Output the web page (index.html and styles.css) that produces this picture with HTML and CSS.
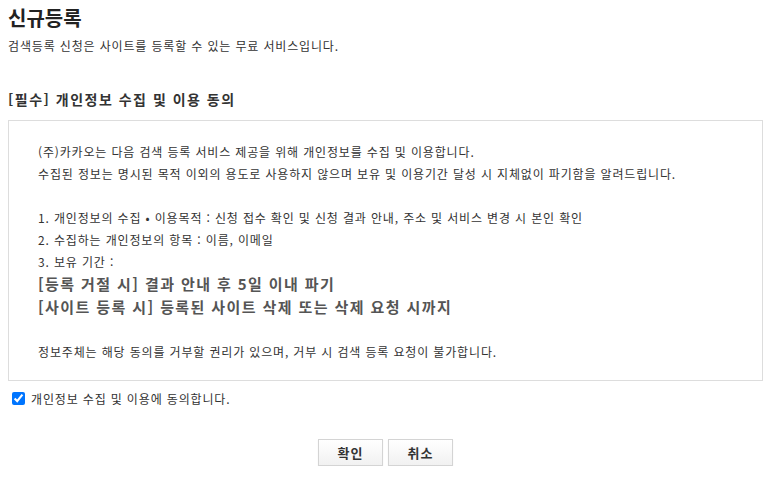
FILE: index.html
```html
<!DOCTYPE html>
<html lang="ko">
<head>
  <meta charset="UTF-8">
  <title>신규등록</title>
  <link rel="stylesheet" href="styles.css">
</head>
<body>

  <h1 class="title">신규등록</h1>
  <p class="desc">검색등록 신청은 사이트를 등록할 수 있는 무료 서비스입니다.</p>

  <h2 class="section">[필수] 개인정보 수집 및 이용 동의</h2>

  <div class="terms">
    <p>(주)카카오는 다음 검색 등록 서비스 제공을 위해 개인정보를 수집 및 이용합니다.<br>
    수집된 정보는 명시된 목적 이외의 용도로 사용하지 않으며 보유 및 이용기간 달성 시 지체없이 파기함을 알려드립니다.</p>
    <p>1. 개인정보의 수집 • 이용목적 : 신청 접수 확인 및 신청 결과 안내, 주소 및 서비스 변경 시 본인 확인<br>
    2. 수집하는 개인정보의 항목 : 이름, 이메일<br>
    3. 보유 기간 :<br>
    <strong>[등록 거절 시] 결과 안내 후 5일 이내 파기</strong><br>
    <strong>[사이트 등록 시] 등록된 사이트 삭제 또는 삭제 요청 시까지</strong></p>
    <p>정보주체는 해당 동의를 거부할 권리가 있으며, 거부 시 검색 등록 요청이 불가합니다.</p>
  </div>

  <label class="agree">
    <input type="checkbox" checked>
    <span>개인정보 수집 및 이용에 동의합니다.</span>
  </label>

  <div class="buttons">
    <button type="button">확인</button>
    <button type="button">취소</button>
  </div>

</body>
</html>
```

FILE: styles.css
```css
body {
  margin: 8px 4px 8px 8px;
  color: #333;
  font-family: "Noto Sans CJK KR", "Noto Sans", sans-serif;
  font-size: 12px;
  letter-spacing: 0.85px;
  background: #fff;
}
.title {
  margin: 0;
  font-size: 20px;
  line-height: 20px;
  letter-spacing: 0;
  color: #222;
}
.desc {
  margin: 9px 0 0;
  line-height: 18px;
}
.section {
  margin: 34px 0 0;
  font-size: 14px;
  line-height: 20px;
  letter-spacing: 1.5px;
  color: #333;
}
.terms {
  margin-top: 11px;
  border: 1px solid #ddd;
  padding: 20px 29px 17px;
  line-height: 22px;
}
.terms p {
  margin: 0 0 22px;
}
.terms p:last-child {
  margin-bottom: 0;
}
.terms strong {
  font-size: 15px;
  letter-spacing: 1.4px;
  color: #555;
}
.agree {
  display: flex;
  align-items: center;
  gap: 6px;
  margin-top: 9px;
}
.agree input {
  margin: 0 0 0 4px;
  width: 13px;
  height: 13px;
}
.buttons {
  display: flex;
  justify-content: center;
  gap: 5px;
  margin-top: 32px;
}
.buttons button {
  width: 65px;
  height: 27px;
  border: 1px solid #d4d4d4;
  background: linear-gradient(#fff, #f1f1f1);
  font-family: inherit;
  font-size: 13px;
  font-weight: bold;
  letter-spacing: 1px;
  color: #333;
  box-shadow: 0 1px 1px rgba(0, 0, 0, 0.08);
}
```
